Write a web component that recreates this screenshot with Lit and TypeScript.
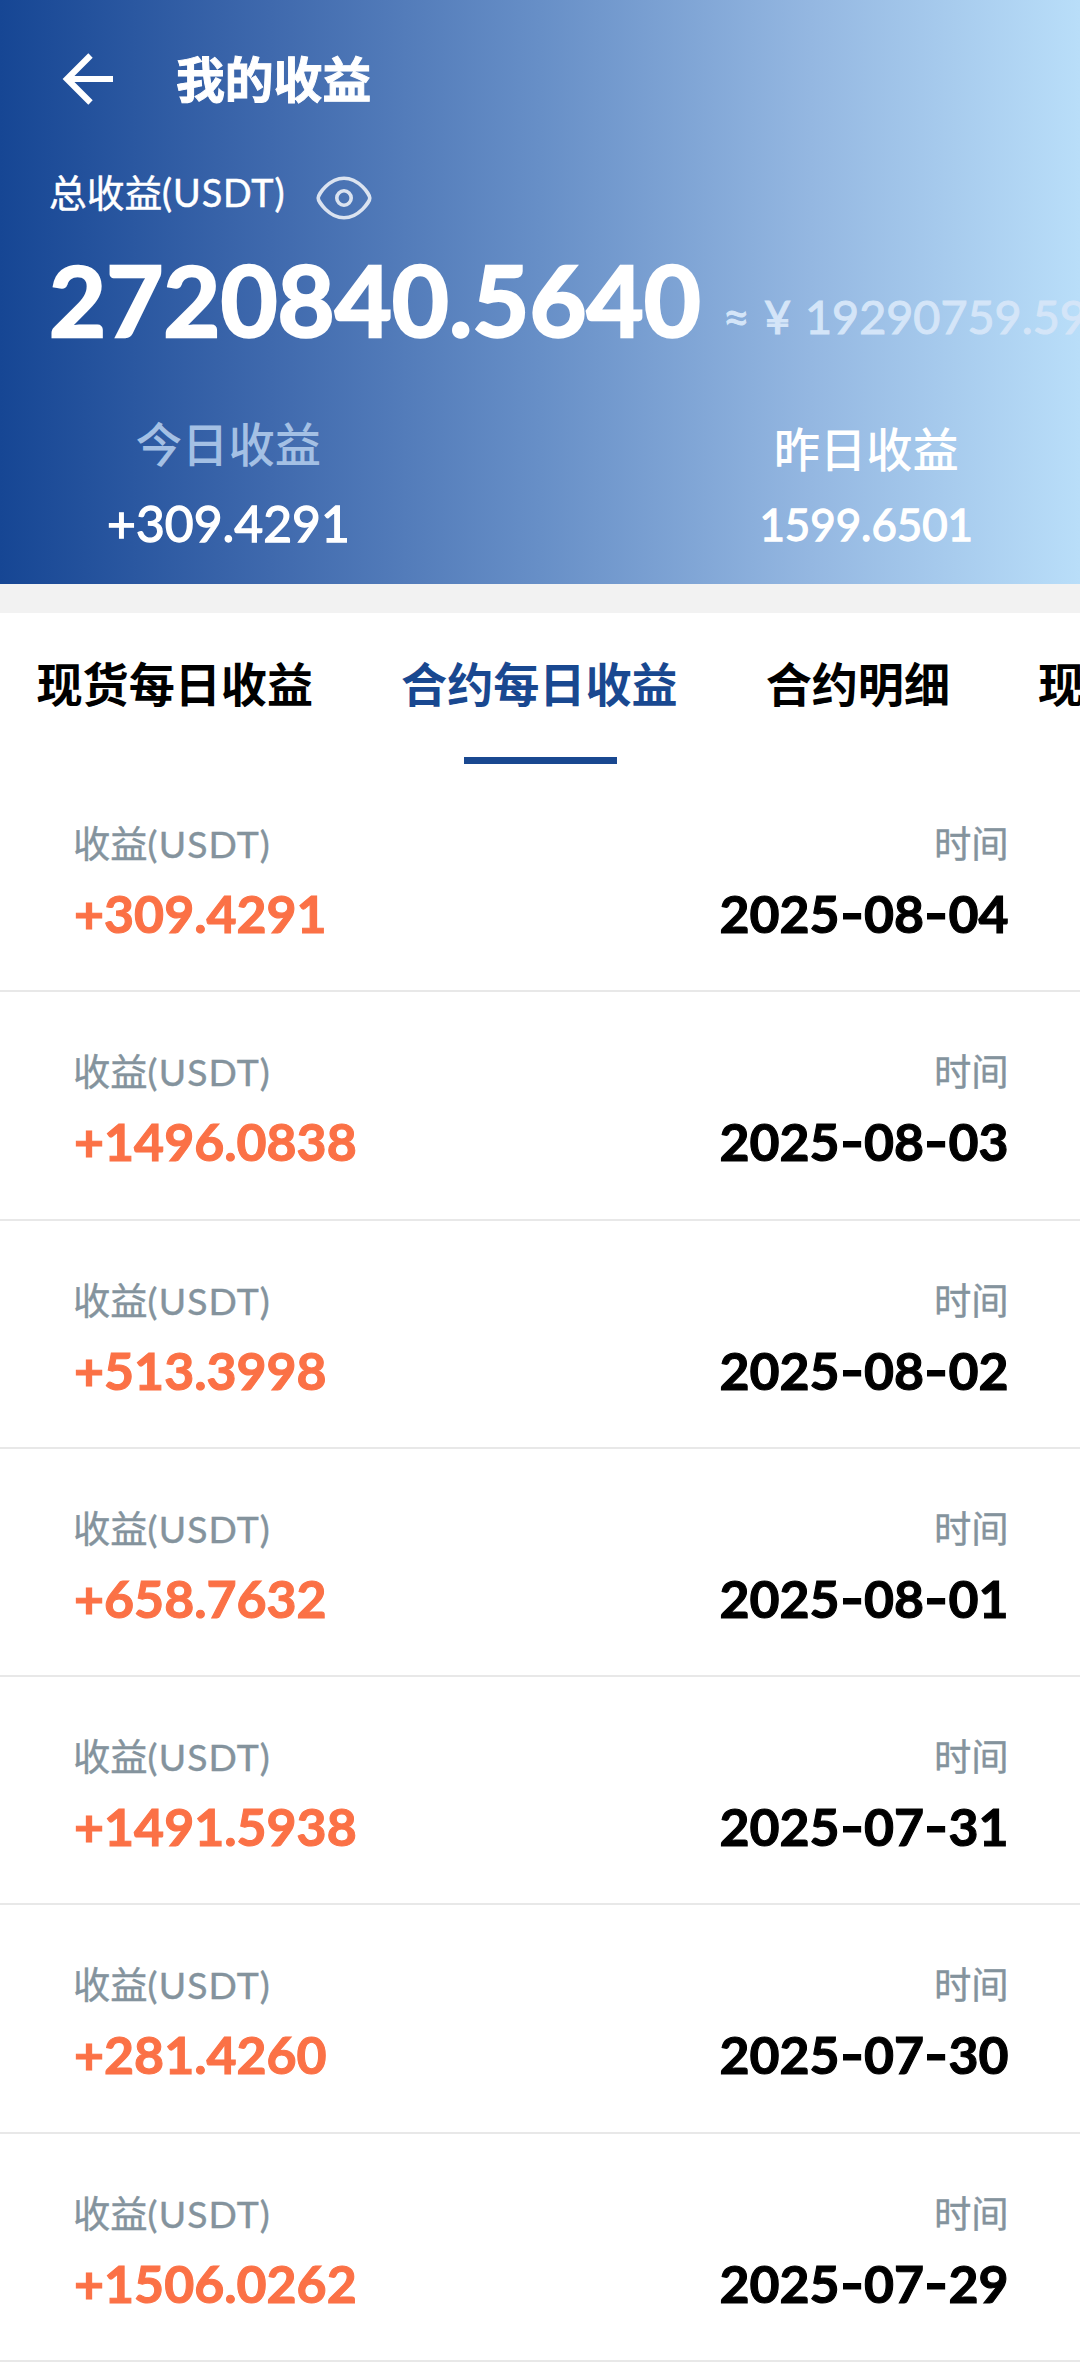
import { LitElement, html, css } from "lit";
import { customElement, property } from "lit/decorators.js";
import { classMap } from "lit/directives/class-map.js";

interface Earning {
  amount: string;
  date: string;
}

const EARNINGS: Earning[] = [
  { amount: "+309.4291", date: "2025-08-04" },
  { amount: "+1496.0838", date: "2025-08-03" },
  { amount: "+513.3998", date: "2025-08-02" },
  { amount: "+658.7632", date: "2025-08-01" },
  { amount: "+1491.5938", date: "2025-07-31" },
  { amount: "+281.4260", date: "2025-07-30" },
  { amount: "+1506.0262", date: "2025-07-29" },
];

const TABS = ["现货每日收益", "合约每日收益", "合约明细", "现货明细"];

@customElement("earnings-header")
export class EarningsHeader extends LitElement {
  static styles = css`
    :host {
      display: block;
      height: 584px;
      overflow: hidden;
      color: #fff;
      background: linear-gradient(90deg, #164694 0%, #3f69ad 25%, #678fc7 50%, #94b7e1 75%, #b9def9 100%);
    }
    .nav {
      display: flex;
      align-items: center;
      height: 157px;
      padding-left: 62px;
    }
    .back {
      display: block;
      width: 52px;
      height: 52px;
    }
    .title {
      margin: 0 0 0 62px;
      font-size: 48.8px;
      line-height: 60px;
      font-weight: 700;
      white-space: nowrap;
      -webkit-text-stroke: 1px currentColor;
    }
    .caption {
      display: flex;
      align-items: center;
      height: 72px;
      padding-left: 49px;
      font-size: 37.7px;
      line-height: 48px;
      -webkit-text-stroke: 0.5px currentColor;
    }
    .latin {
      letter-spacing: 0.9px;
    }
    .eye {
      display: block;
      width: 58px;
      height: 46px;
      margin: 10px 0 0 30px;
    }
    .total {
      display: flex;
      align-items: baseline;
      padding-left: 49px;
      white-space: nowrap;
      line-height: 120px;
      height: 120px;
      margin-top: 10px;
    }
    .sum {
      font-size: 98.5px;
      font-weight: 700;
      font-kerning: none;
      -webkit-text-stroke: 2.4px currentColor;
    }
    .approx {
      display: flex;
      align-items: baseline;
      gap: 14px;
      position: relative;
      top: -3px;
      margin-left: 22px;
      font-size: 46.7px;
      font-kerning: none;
      color: #d4e5f8;
      -webkit-text-stroke: 1.1px currentColor;
    }
    .stats {
      display: flex;
      justify-content: space-between;
      padding: 55px 107px 0 107px;
      white-space: nowrap;
    }
    .stat {
      display: flex;
      flex-direction: column;
      align-items: center;
    }
    .label {
      font-size: 46.3px;
      line-height: 60px;
      font-weight: 500;
    }
    .dim {
      color: #a4c0e4;
    }
    .value {
      font-size: 49.8px;
      line-height: 60px;
      margin-top: 19px;
      font-weight: 400;
      font-kerning: none;
      -webkit-text-stroke: 1.3px currentColor;
    }
    .small {
      font-size: 43.8px;
      margin-top: 15px;
    }
    .lower {
      padding-top: 5px;
    }
  `;

  render() {
    return html`
      <div class="nav">
        <svg class="back" viewBox="0 0 52 52" fill="none" stroke="#fff" stroke-width="6.2">
          <path d="M51 26H5M28.5 2.5L5 26L28.5 49.5" />
        </svg>
        <h1 class="title">我的收益</h1>
      </div>
      <div class="caption">
        <span>总收益<span class="latin">(USDT)</span></span>
        <svg class="eye" viewBox="0 0 58 46" fill="none" stroke="rgba(255,255,255,.8)" stroke-width="3.6">
          <path
            d="M3.2 23C3.2 19.5 14 3.2 29 3.2S54.8 19.5 54.8 23S44 42.8 29 42.8S3.2 26.5 3.2 23Z"
          />
          <circle cx="29" cy="23" r="7.2" />
        </svg>
      </div>
      <div class="total">
        <span class="sum">2720840.5640</span>
        <span class="approx"><span>≈</span><span>¥</span><span>19290759.59</span></span>
      </div>
      <div class="stats">
        <div class="stat">
          <span class="label dim">今日收益</span>
          <span class="value">+309.4291</span>
        </div>
        <div class="stat lower">
          <span class="label">昨日收益</span>
          <span class="value small">1599.6501</span>
        </div>
      </div>
    `;
  }
}

@customElement("earnings-tabs")
export class EarningsTabs extends LitElement {
  @property({ type: Array }) tabs: string[] = [];
  @property({ type: Number }) active = 0;

  static styles = css`
    :host {
      display: flex;
      gap: 88px;
      height: 151px;
      padding-left: 36.5px;
      overflow: hidden;
      background: #fff;
    }
    .tab {
      display: flex;
      flex: none;
      flex-direction: column;
      align-items: center;
      justify-content: space-between;
      box-sizing: border-box;
      padding-top: 41px;
      font-size: 46.1px;
      line-height: 60px;
      font-weight: 700;
      color: #000;
      white-space: nowrap;
    }
    .on {
      color: #194890;
    }
    .on::after {
      content: "";
      width: 153px;
      height: 7px;
      margin-left: 3px;
      background: #194890;
    }
  `;

  render() {
    return this.tabs.map(
      (t, i) => html`<div class=${classMap({ tab: true, on: i === this.active })}>${t}</div>`
    );
  }
}

@customElement("earnings-row")
export class EarningsRow extends LitElement {
  @property() amount = "";
  @property() date = "";

  static styles = css`
    :host {
      display: flex;
      justify-content: space-between;
      box-sizing: border-box;
      height: 228.3px;
      padding: 52px 71.5px 0 73px;
      border-bottom: 2px solid #e8e8e8;
      background: #fff;
    }
    .cell {
      display: flex;
      flex-direction: column;
    }
    .end {
      align-items: flex-end;
    }
    .label {
      font-size: 37.3px;
      line-height: 56px;
      color: #84939d;
      -webkit-text-stroke: 0.4px currentColor;
    }
    .latin {
      letter-spacing: 1.1px;
    }
    .value {
      margin-top: 11px;
      font-size: 51.8px;
      line-height: 60px;
      font-weight: 700;
      font-kerning: none;
      color: #000;
      -webkit-text-stroke: 1.1px currentColor;
    }
    .gain {
      padding-left: 1px;
      color: #fb7146;
    }
    .dash {
      display: inline-block;
      padding: 0 2.5px;
      transform: translateY(-1px) scaleX(1.25);
    }
  `;

  render() {
    return html`
      <div class="cell">
        <span class="label">收益<span class="latin">(USDT)</span></span>
        <span class="value gain">${this.amount}</span>
      </div>
      <div class="cell end">
        <span class="label">时间</span>
        <span class="value"
          >${this.date
            .split("-")
            .map((part, i) => (i ? html`<span class="dash">-</span>${part}` : part))}</span
        >
      </div>
    `;
  }
}

@customElement("app-root")
export class AppRoot extends LitElement {
  static styles = css`
    :host {
      display: block;
      height: 2372px;
      overflow: hidden;
      background: #fff;
      font-family: Lato, "Noto Sans CJK SC", sans-serif;
    }
    .divider {
      height: 29px;
      background: #f2f2f2;
    }
  `;

  render() {
    return html`
      <earnings-header></earnings-header>
      <div class="divider"></div>
      <earnings-tabs .tabs=${TABS} .active=${1}></earnings-tabs>
      ${EARNINGS.map(
        (e) => html`<earnings-row .amount=${e.amount} .date=${e.date}></earnings-row>`
      )}
    `;
  }
}
